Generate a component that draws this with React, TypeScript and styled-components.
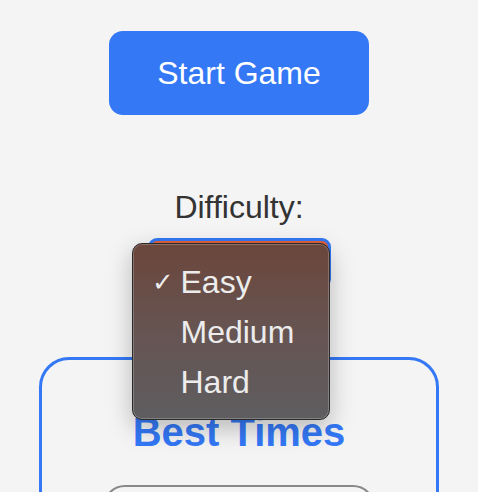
import React, { FC } from "react"
import styled, { createGlobalStyle } from "styled-components"

const Global = createGlobalStyle`
  html, body {
    margin: 0;
    padding: 0;
    background: #f4f4f4;
    font-family: "Liberation Sans", Arial, sans-serif;
    overflow: hidden;
  }
`

const Page = styled.div`
  display: flex;
  flex-direction: column;
  align-items: center;
  padding-top: 31px;
  width: 478px;
  height: 492px;
  overflow: hidden;
  box-sizing: border-box;

  & > * {
    flex-shrink: 0;
  }
`

const StartButton = styled.button`
  width: 260px;
  height: 84px;
  border: none;
  border-radius: 14px;
  background: #3478f6;
  color: #fff;
  font-family: inherit;
  font-size: 32px;
  padding: 0;
`

const Label = styled.div`
  margin-top: 74px;
  font-size: 32px;
  color: #333;
  line-height: 37px;
`

const SelectWrap = styled.div`
  position: relative;
  margin-top: 12px;
`

const SelectBox = styled.div`
  width: 183px;
  height: 50px;
  box-sizing: border-box;
  border: 3px solid #3478f6;
  border-radius: 9px;
  background: #e0603a;
`

const Menu = styled.div`
  position: absolute;
  left: -16px;
  top: 5px;
  width: 198px;
  height: 177px;
  box-sizing: border-box;
  padding: 13px 0 14px;
  border-radius: 10px;
  border: 1px solid #2a2a2a;
  box-shadow: inset 0 0 0 1px rgba(255, 255, 255, 0.22), 0 8px 24px rgba(0, 0, 0, 0.25);
  background: linear-gradient(180deg, #6b463b 0%, #665452 50%, #5e5d60 100%);
  z-index: 2;
`

const Option = styled.div`
  display: flex;
  align-items: center;
  height: 50px;
  font-size: 32px;
  color: #ececec;
`

const Check = styled.span`
  width: 48px;
  padding-left: 19px;
  box-sizing: border-box;
  font-size: 26px;
`

const Card = styled.div`
  margin-top: 69px;
  width: 400px;
  box-sizing: border-box;
  border: 3px solid #3478f6;
  border-radius: 30px;
  padding-top: 49px;
  display: flex;
  flex-direction: column;
  align-items: center;
  height: 200px;
`

const CardTitle = styled.h2`
  margin: 0;
  font-size: 40px;
  line-height: 46px;
  font-weight: bold;
  color: #3478f6;
`

const TimesBox = styled.div`
  margin-top: 30px;
  width: 272px;
  height: 80px;
  flex-shrink: 0;
  box-sizing: border-box;
  border: 2px solid #888;
  border-radius: 22px;
`

const options = ["Easy", "Medium", "Hard"]

const App: FC = () => (
  <Page>
    <Global />
    <StartButton>Start Game</StartButton>
    <Label>Difficulty:</Label>
    <SelectWrap>
      <SelectBox />
      <Menu>
        {options.map((o, i) => (
          <Option key={o}>
            <Check>{i === 0 ? "✓" : ""}</Check>
            {o}
          </Option>
        ))}
      </Menu>
    </SelectWrap>
    <Card>
      <CardTitle>Best Times</CardTitle>
      <TimesBox />
    </Card>
  </Page>
)

export default App
